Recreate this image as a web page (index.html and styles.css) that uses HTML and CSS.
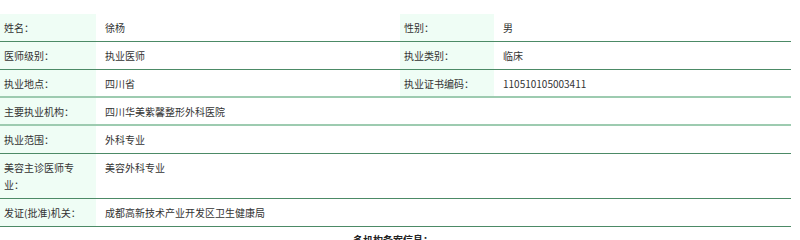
FILE: index.html
```html
<!DOCTYPE html>
<html lang="zh">
<head>
<meta charset="utf-8">
<link rel="stylesheet" href="styles.css">
</head>
<body>
<div class="wrap">
<table class="info">
<colgroup><col class="c1"><col class="c2"><col class="c3"><col class="c4"></colgroup>
<tr class="dark"><td class="lab">姓名：</td><td>徐杨</td><td class="lab">性别：</td><td>男</td></tr>
<tr class="dark"><td class="lab">医师级别：</td><td>执业医师</td><td class="lab">执业类别：</td><td>临床</td></tr>
<tr class="light"><td class="lab">执业地点：</td><td>四川省</td><td class="lab">执业证书编码：</td><td>110510105003411</td></tr>
<tr class="light"><td class="lab">主要执业机构：</td><td colspan="3">四川华美紫馨整形外科医院</td></tr>
<tr class="dark"><td class="lab">执业范围：</td><td colspan="3">外科专业</td></tr>
<tr class="dark"><td class="lab">美容主诊医师专业：</td><td colspan="3">美容外科专业</td></tr>
<tr class="dark"><td class="lab">发证(批准)机关：</td><td colspan="3">成都高新技术产业开发区卫生健康局</td></tr>
</table>
<div class="sub">多机构备案信息：</div>
</div>
</body>
</html>
```

FILE: styles.css
```css
html, body { margin: 0; padding: 0; background: #fff; }
body { font-family: "Noto Sans CJK SC", "Noto Sans", sans-serif; font-size: 10px; color: #333; }
.wrap { padding-top: 14px; width: 791px; }
.info { border-collapse: collapse; width: 791px; table-layout: fixed; }
.c1 { width: 96px; }
.c2 { width: 304px; }
.c3 { width: 94px; }
.c4 { width: 297px; }
.info td { padding: 5px 4px 5px 9px; line-height: 17px; vertical-align: top; }
.info td.lab { background: #effdf5; padding-left: 4px; padding-right: 10px; }
.dark td { border-bottom: 1px solid #4c8a66; }
.light td { border-bottom: 2px solid #9dcbb0; }
.light td { padding-bottom: 4px; }
.sub { font-weight: bold; padding-left: 353px; line-height: 17px; margin-top: 4px; color: #222; }
```
